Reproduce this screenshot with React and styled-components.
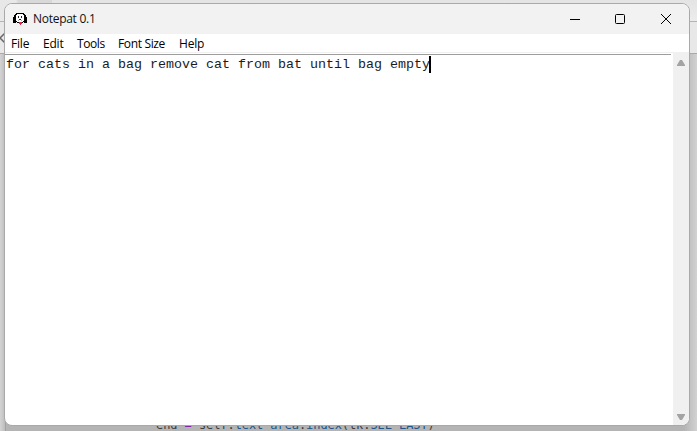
import React from "react";
import styled, { createGlobalStyle } from "styled-components";

const Global = createGlobalStyle`
  * { box-sizing: border-box; }
  body { margin: 0; overflow: hidden; }
`;

const Desktop = styled.div`
  position: relative;
  width: 697px;
  height: 431px;
  overflow: hidden;
  background: #dcdcdc;
`;

const Backdrop = styled.div`
  position: absolute;
  inset: 0;
  display: grid;
  grid-template-rows: 22px 32px 1fr;
`;

const BackTabs = styled.div`
  display: grid;
  grid-template-columns: 52px 1fr;
  background: linear-gradient(#e4e4e4, #ececec);
  border-bottom: 1px solid #b4b4b4;
`;

const BackTab = styled.div`
  background: linear-gradient(90deg, #e8e8e8 0 16px, #d8d8d8 18px);
`;

const BackToolbar = styled.div`
  display: flex;
  align-items: center;
  background: #e8e8e8;
  border-bottom: 1px solid #a9a9a9;
`;

const BackEditor = styled.div`
  display: grid;
  grid-template-columns: 6px 1fr;
  align-items: end;
  background: linear-gradient(90deg, #d4d4d4 0, #b4b4b4 7px 684px, #c2c2c2 690px, #d2d2d2);
`;

const BackGutter = styled.div`
  height: 100%;
  border-right: 1px solid #a2a2a2;
`;

const CodeLine = styled.div`
  height: 14px;
  padding-left: 150px;
  font: 12px/16px "DejaVu Sans Mono", monospace;
  letter-spacing: -0.08px;
  white-space: pre;
  color: #3c3c3c;
`;

const Token = styled.span`
  color: ${(p) => p.$color};
`;

const Window = styled.div`
  position: absolute;
  left: 4px;
  top: 3px;
  width: 686px;
  height: 423px;
  display: grid;
  grid-template-rows: 30px 18px 1fr;
  overflow: hidden;
  border: 1px solid #a9a9a9;
  border-radius: 8px;
  background: #fff;
`;

const TitleBar = styled.header`
  display: flex;
  align-items: center;
  padding-left: 8px;
  background: #f2f2f2;
`;

const Title = styled.span`
  flex: 1;
  padding-left: 5px;
  font: 12px/16px "Open Sans", sans-serif;
  letter-spacing: -0.28px;
  color: #111;
`;

const WindowButton = styled.div`
  display: grid;
  place-items: center;
  width: ${(p) => p.$width}px;
  height: 30px;
`;

const MenuBar = styled.nav`
  display: flex;
  padding-left: 6px;
  background: #fff;
`;

const MenuItem = styled.span`
  width: ${(p) => p.$width}px;
  font: 12px/19px "Open Sans", sans-serif;
  letter-spacing: ${(p) => p.$spacing}px;
  white-space: nowrap;
  color: #000;
`;

const Body = styled.main`
  display: grid;
  grid-template-columns: 1fr 18px;
  border-top: 1px solid #f0f0f0;
`;

const TextArea = styled.div`
  display: flex;
  align-items: flex-start;
  margin-top: 1px;
  padding: 1px 0 0 1px;
  border-top: 1px solid #9d9d9d;
  font: 13.333px/17px "Liberation Mono", monospace;
  white-space: pre;
  color: #1c1c1c;
`;

const Caret = styled.span`
  width: 2px;
  height: 17px;
  margin-left: -1px;
  background: #000;
`;

const ScrollBar = styled.div`
  display: flex;
  flex-direction: column;
  justify-content: space-between;
  align-items: center;
  margin-left: 2px;
  padding: 7px 0 5px;
  background: #f0f0f0;
`;

const menus = [
  ["File", 32, -0.2],
  ["Edit", 34, -0.2],
  ["Tools", 41, -0.4],
  ["Font Size", 61, -0.35],
  ["Help", 40, -0.2],
];

const DogIcon = () => (
  <svg width="15" height="13" viewBox="0 0 15 13" shapeRendering="crispEdges">
    <path d="M3 0h8v1h1v1h1v2h1v6h-3V9h-1v1H4V9H3v1H0V4h1V2h1V1h1z" fill="#000" />
    <path d="M4 1h6v1h1v6h-1v1H4V8H3V2h1z" fill="#fff" />
    <path d="M5 3h1v2H5zM8 3h1v2H8zM6 6h2v1H6z" fill="#222" />
    <path d="M5 7h1v1H5zM8 7h1v1H8z" fill="#aaa" />
    <path d="M6 9h3v2H8v1H7v-1H6z" fill="#e8234a" />
  </svg>
);

export default function App() {
  return (
    <Desktop>
      <Global />
      <Backdrop>
        <BackTabs><BackTab /></BackTabs>
        <BackToolbar>
          <svg width="6" height="14" viewBox="0 0 6 14" fill="none" stroke="#666" strokeWidth="1.5"><path d="M5 2L0 7l5 5" /></svg>
        </BackToolbar>
        <BackEditor>
          <BackGutter />
          <CodeLine>
            end <Token $color="#8226b0">=</Token> self.<Token $color="#1f5588">text_area</Token>.<Token $color="#1f5588">index</Token>(tk.<Token $color="#1f5588">SEL_LAST</Token>)
          </CodeLine>
        </BackEditor>
      </Backdrop>
      <Window>
        <TitleBar>
          <DogIcon />
          <Title>Notepat 0.1</Title>
          <WindowButton $width={45}>
            <svg width="10" height="10"><path d="M0 5.5h10" stroke="#000" /></svg>
          </WindowButton>
          <WindowButton $width={46}>
            <svg width="10" height="10"><rect x=".5" y=".5" width="9" height="9" rx="1" fill="none" stroke="#000" /></svg>
          </WindowButton>
          <WindowButton $width={46}>
            <svg width="10" height="10"><path d="M0 0l10 10M10 0L0 10" stroke="#000" /></svg>
          </WindowButton>
        </TitleBar>
        <MenuBar>
          {menus.map(([label, width, spacing]) => (
            <MenuItem key={label} $width={width} $spacing={spacing}>{label}</MenuItem>
          ))}
        </MenuBar>
        <Body>
          <TextArea>for cats in a bag remove cat from bat until bag empty<Caret /></TextArea>
          <ScrollBar>
            <svg width="8" height="6"><path d="M3 0h2l3 5v1H0V5z" fill="#a3a3a3" /></svg>
            <svg width="8" height="6"><path d="M0 0h8v1L5 6H3L0 1z" fill="#a3a3a3" /></svg>
          </ScrollBar>
        </Body>
      </Window>
    </Desktop>
  );
}
